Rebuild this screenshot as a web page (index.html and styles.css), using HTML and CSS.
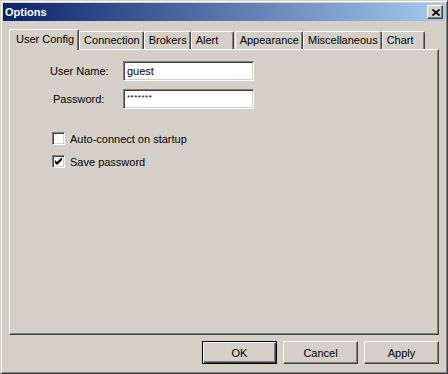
FILE: index.html
```html
<!DOCTYPE html>
<html lang="en">
<head>
    <meta charset="UTF-8">
    <title>Options</title>
    <link rel="stylesheet" href="styles.css">
</head>
<body>
    <div class="window">
        <div class="titlebar">
            <span class="title">Options</span>
            <div class="close">
                <svg width="8" height="7" viewBox="0 0 8 7"><path d="M0.5 0.5 L7.5 6.5 M7.5 0.5 L0.5 6.5" stroke="#000" stroke-width="1.6"/></svg>
            </div>
        </div>
        <div class="content">
            <div class="tabs">
                <div class="tab active">User Config</div>
                <div class="tab">Connection</div>
                <div class="tab">Brokers</div>
                <div class="tab alert">Alert</div>
                <div class="tab">Appearance</div>
                <div class="tab">Miscellaneous</div>
                <div class="tab">Chart</div>
            </div>
            <div class="panel">
                <div class="field">
                    <span class="label">User Name:</span>
                    <div class="input">guest</div>
                </div>
                <div class="field">
                    <span class="label indent">Password:</span>
                    <div class="input secret">*******</div>
                </div>
                <div class="checks">
                    <div class="check"><span class="box"></span>Auto-connect on startup</div>
                    <div class="check">
                        <span class="box">
                            <svg width="7" height="7" viewBox="0 0 7 7"><path d="M0 2 L2 4 L7 -1 L7 2 L2 7 L0 5 Z" fill="#000"/></svg>
                        </span>
                        Save password
                    </div>
                </div>
            </div>
            <div class="buttons">
                <div class="btn default">OK</div>
                <div class="btn">Cancel</div>
                <div class="btn">Apply</div>
            </div>
        </div>
    </div>
</body>
</html>
```

FILE: styles.css
```css
* {
    box-sizing: border-box;
}
body {
    margin: 0;
    font-family: "Liberation Sans", Arial, sans-serif;
    font-size: 11px;
    color: #000;
    background: #d4d0c8;
}
.window {
    width: 448px;
    height: 374px;
    background: #d4d0c8;
    border: 1px solid;
    border-color: #d4d0c8 #404040 #404040 #d4d0c8;
    box-shadow: inset 1px 1px #fff, inset -1px -1px #808080;
    padding: 2px;
}
.titlebar {
    height: 18px;
    display: flex;
    align-items: center;
    justify-content: space-between;
    padding: 0 2px 0 2px;
    background: linear-gradient(to right, #0a246a, #a6caf0);
}
.title {
    color: #fff;
    font-weight: bold;
    font-size: 11px;
}
.close {
    width: 16px;
    height: 14px;
    display: flex;
    align-items: center;
    justify-content: center;
    background: #d4d0c8;
    border: 1px solid;
    border-color: #fff #404040 #404040 #fff;
    box-shadow: inset -1px -1px #808080;
    padding-left: 1px;
}
.content {
    padding: 8px 6px 0 6px;
}
.tabs {
    display: flex;
    align-items: flex-end;
    height: 20px;
    position: relative;
    z-index: 1;
}
.tab {
    height: 18px;
    min-width: 43px;
    padding: 2px 3px 0 4px;
    border-top: 1px solid #fff;
    border-left: 1px solid #fff;
    border-right: 1px solid #404040;
    border-radius: 2px 2px 0 0;
    box-shadow: inset -1px 0 #808080;
    white-space: nowrap;
}
.tab.alert {
    margin-right: 1px;
}
.tab.active {
    height: 21px;
    margin-bottom: -1px;
    padding: 3px 4px 0 6px;
    background: #d4d0c8;
}
.panel {
    height: 286px;
    border: 1px solid;
    border-color: #fff #404040 #404040 #fff;
    box-shadow: inset -1px -1px #808080;
    padding: 11px 0 0 40px;
}
.field {
    display: flex;
    align-items: center;
    margin-bottom: 8px;
}
.label {
    width: 73px;
}
.label.indent {
    padding-left: 3px;
}
.input {
    width: 131px;
    height: 20px;
    background: #fff;
    border: 1px solid;
    border-color: #808080 #fff #fff #808080;
    box-shadow: inset 1px 1px #404040, inset -1px -1px #d4d0c8;
    padding: 3px 0 0 3px;
}
.input.secret {
    font-size: 8px;
    letter-spacing: 0.5px;
    padding-top: 3px;
}
.checks {
    margin-top: 23px;
    padding-left: 2px;
}
.check {
    display: flex;
    align-items: center;
    height: 13px;
    margin-bottom: 10px;
}
.box {
    width: 13px;
    height: 13px;
    margin-right: 5px;
    background: #fff;
    border: 1px solid;
    border-color: #808080 #fff #fff #808080;
    box-shadow: inset 1px 1px #404040, inset -1px -1px #d4d0c8;
    display: flex;
    align-items: center;
    justify-content: center;
}
.buttons {
    display: flex;
    justify-content: flex-end;
    gap: 6px;
    margin-top: 6px;
}
.btn {
    width: 75px;
    height: 23px;
    display: flex;
    align-items: center;
    justify-content: center;
    border: 1px solid;
    border-color: #fff #404040 #404040 #fff;
    box-shadow: inset -1px -1px #808080;
}
.btn.default {
    border-color: #000;
    box-shadow: inset 1px 1px #fff, inset -1px -1px #404040, inset -2px -2px #808080;
}
```
